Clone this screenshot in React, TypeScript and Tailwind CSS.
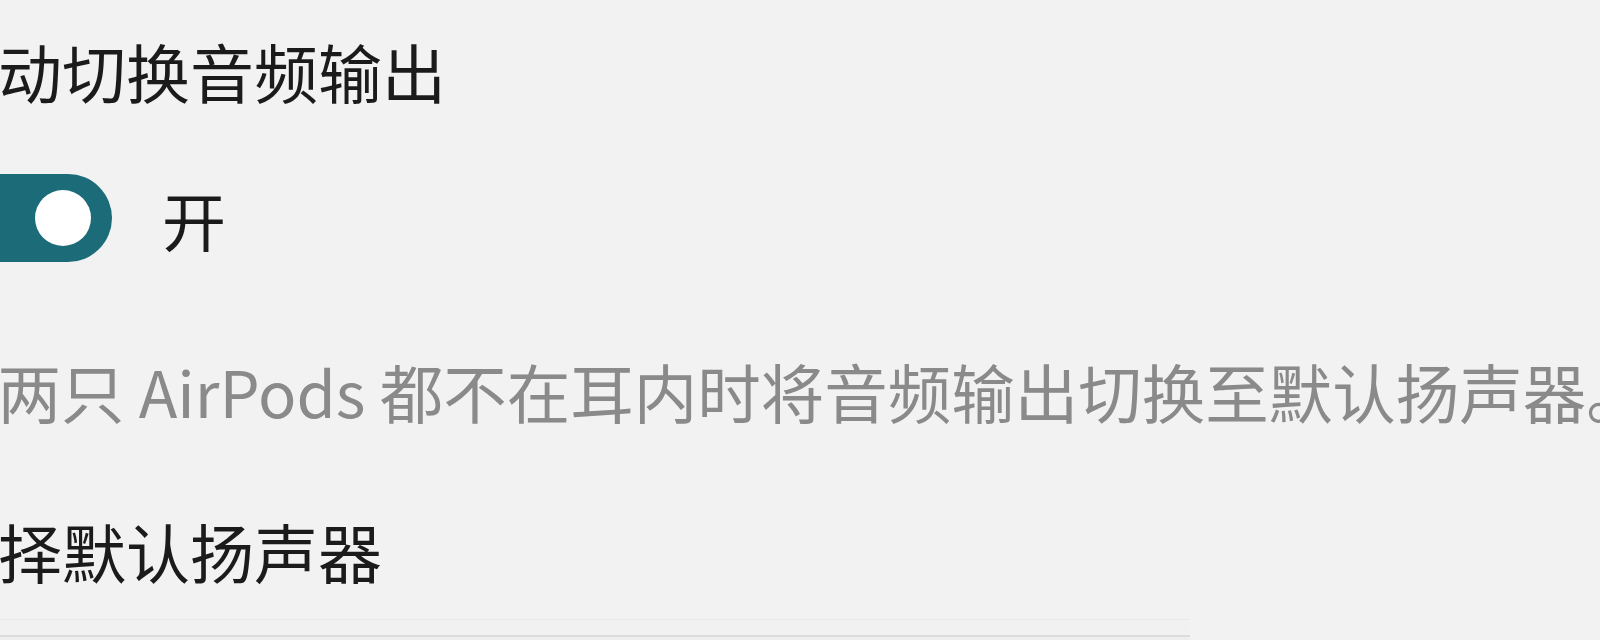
import React from "react";

export default function App() {
  return (
    <div
      className="w-[1600px] h-[640px] overflow-hidden bg-[#f2f2f2]"
      style={{ fontFamily: '"Noto Sans CJK SC", "Noto Sans", sans-serif' }}
    >
      <div className="ml-[-66px] pt-[30px] flex flex-col">
        <div className="text-[64px] leading-[80px] text-[#1b1b1b] whitespace-nowrap">
          自动切换音频输出
        </div>
        <div className="mt-[64px] flex items-center gap-[50px]">
          <div className="w-[178px] h-[88px] rounded-full bg-[#1c6b78] flex items-center justify-end pr-[21px]">
            <div className="w-[56px] h-[56px] rounded-full bg-white" />
          </div>
          <div className="text-[64px] leading-[80px] text-[#1b1b1b]">开</div>
        </div>
        <div className="mt-[88px] text-[63.5px] leading-[80px] text-[#8a8a8a] whitespace-nowrap">
          当两只 AirPods 都不在耳内时将音频输出切换至默认扬声器。
        </div>
        <div className="mt-[80px] text-[64px] leading-[80px] text-[#1b1b1b] whitespace-nowrap">
          选择默认扬声器
        </div>
        <div className="mt-[29px] w-[1256px] h-[40px] border-t border-[#e9e9e9] bg-[#f1f1f1] flex flex-col">
          <div className="mt-[15px] h-full border-t-2 border-[#dcdcdc] bg-[#eeeeee]" />
        </div>
      </div>
    </div>
  );
}
